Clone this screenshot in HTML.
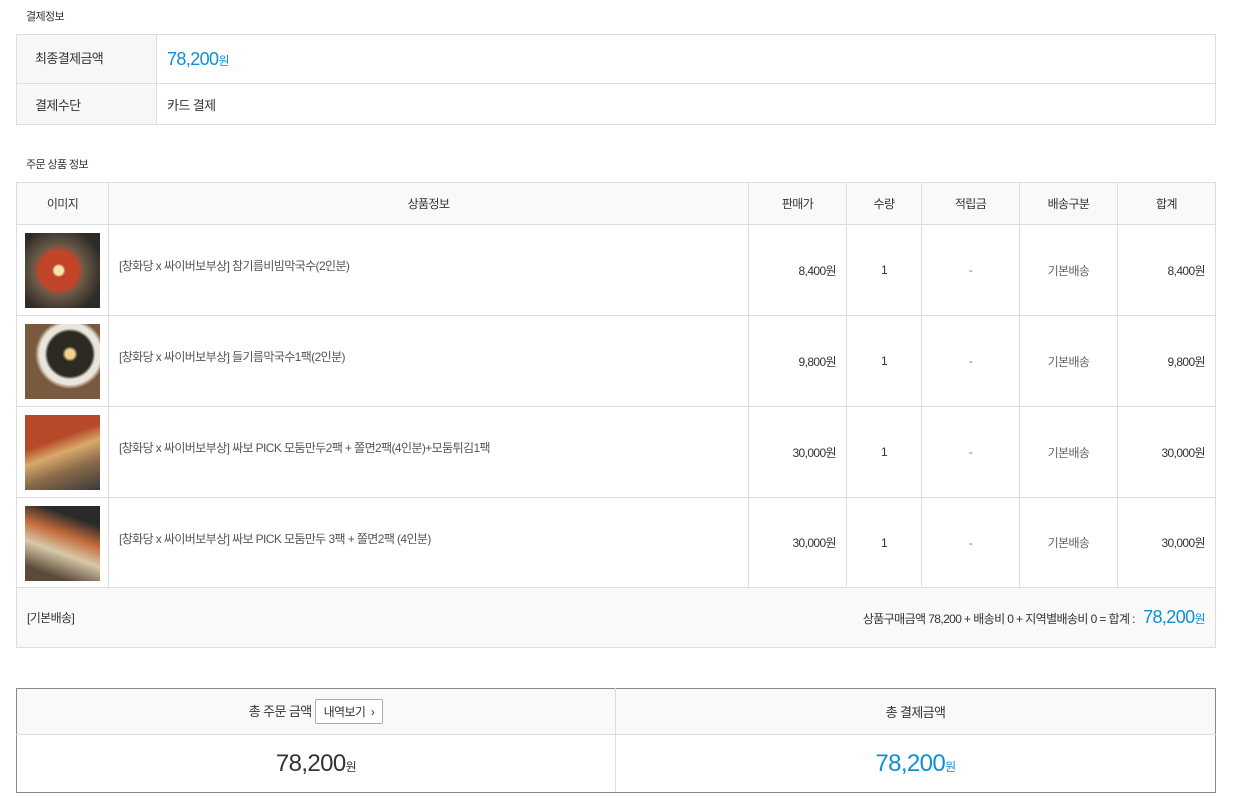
<!DOCTYPE html>
<html><head><meta charset="utf-8"><style>
*{margin:0;padding:0;box-sizing:border-box}
body{width:1233px;height:809px;background:#fff;font-family:"Liberation Sans","Noto Sans CJK KR",sans-serif;color:#333;font-size:12px;position:relative;overflow:hidden;letter-spacing:-0.6px}
.a{position:absolute}
.t{color:#333;font-size:11px}
table{border-collapse:collapse;position:absolute;table-layout:fixed}
td,th{border:1px solid #ddd;font-weight:normal}
.blue{color:#0e8fd5}
.img{width:75px;height:75px;position:absolute;left:8px;top:8px}
</style></head><body>
<div class="a t" style="left:26px;top:8px">결제정보</div>
<table style="left:16px;top:34px;width:1200px">
<tr style="height:49px"><td style="width:140px;background:#f7f7f7;padding-left:18px;font-size:13px;padding-bottom:4px">최종결제금액</td><td style="padding-left:10px"><span class="blue" style="font-size:18px">78,200</span><span class="blue" style="font-size:12px">원</span></td></tr>
<tr style="height:41px"><td style="background:#f7f7f7;padding-left:18px;font-size:13px">결제수단</td><td style="padding-left:10px;font-size:13px">카드 결제</td></tr>
</table>
<div class="a t" style="left:26px;top:156px">주문 상품 정보</div>
<table style="left:16px;top:182px;width:1199px;font-size:12px">
<tr style="height:42px;background:#f9f9f9;text-align:center"><td style="width:92px">이미지</td><td style="width:640px">상품정보</td><td style="width:98px">판매가</td><td style="width:75px">수량</td><td style="width:98px">적립금</td><td style="width:98px">배송구분</td><td style="width:98px">합계</td></tr>
<tr style="height:91px"><td style="position:relative"><div class="img" style="background:radial-gradient(circle at 45% 50%,#f5e6b0 0 8%,#c2452a 12% 35%,#6b5a48 45%,#2e2a26 80%)"></div></td><td style="padding-left:10px;color:#555;vertical-align:top;padding-top:32px">[창화당 x 싸이버보부상] 참기름비빔막국수(2인분)</td><td style="text-align:right;padding-right:10px">8,400원</td><td style="text-align:center">1</td><td style="text-align:center;color:#777">-</td><td style="text-align:center;color:#666">기본배송</td><td style="text-align:right;padding-right:10px">8,400원</td></tr>
<tr style="height:91px"><td style="position:relative"><div class="img" style="background:radial-gradient(circle at 60% 40%,#f3d58a 0 7%,#2b2b22 12% 35%,#e9e4dc 40% 48%,#7a5a3e 55%)"></div></td><td style="padding-left:10px;color:#555;vertical-align:top;padding-top:32px">[창화당 x 싸이버보부상] 들기름막국수1팩(2인분)</td><td style="text-align:right;padding-right:10px">9,800원</td><td style="text-align:center">1</td><td style="text-align:center;color:#777">-</td><td style="text-align:center;color:#666">기본배송</td><td style="text-align:right;padding-right:10px">9,800원</td></tr>
<tr style="height:91px"><td style="position:relative"><div class="img" style="background:linear-gradient(160deg,#b84a2a 0 35%,#d9a96a 50%,#8a6a4a 70%,#3a3a3a)"></div></td><td style="padding-left:10px;color:#555;vertical-align:top;padding-top:32px">[창화당 x 싸이버보부상] 싸보 PICK 모둠만두2팩 + 쫄면2팩(4인분)+모둠튀김1팩</td><td style="text-align:right;padding-right:10px">30,000원</td><td style="text-align:center">1</td><td style="text-align:center;color:#777">-</td><td style="text-align:center;color:#666">기본배송</td><td style="text-align:right;padding-right:10px">30,000원</td></tr>
<tr style="height:90px"><td style="position:relative"><div class="img" style="background:linear-gradient(200deg,#2a2a2a 0 20%,#c26a3a 40%,#d8c8a8 60%,#5a4a3a 85%)"></div></td><td style="padding-left:10px;color:#555;vertical-align:top;padding-top:32px">[창화당 x 싸이버보부상] 싸보 PICK 모둠만두 3팩 + 쫄면2팩 (4인분)</td><td style="text-align:right;padding-right:10px">30,000원</td><td style="text-align:center">1</td><td style="text-align:center;color:#777">-</td><td style="text-align:center;color:#666">기본배송</td><td style="text-align:right;padding-right:10px">30,000원</td></tr>
<tr style="height:60px;background:#f9f9f9"><td colspan="2" style="border-right:none;padding-left:10px">[기본배송]</td><td colspan="5" style="border-left:none;text-align:right;padding-right:10px">상품구매금액 78,200 + 배송비 0 + 지역별배송비 0 = 합계 : &nbsp; <span class="blue" style="font-size:18px">78,200</span><span class="blue">원</span></td></tr>
</table>
<table style="left:16px;top:688px;width:1200px;border:1px solid #888">
<tr style="height:46px;background:#f9f9f9;text-align:center;font-size:13px"><td style="width:599px;border-color:#ddd;border-top:1px solid #888;border-left:1px solid #888">총 주문 금액 <span style="display:inline-block;border:1px solid #aaa;background:#fff;padding:3px 8px;font-size:12px;border-radius:2px">내역보기 &nbsp;›</span></td><td style="border-top:1px solid #888;border-right:1px solid #888">총 결제금액</td></tr>
<tr style="height:58px;text-align:center"><td style="border-bottom:1px solid #888;border-left:1px solid #888"><span style="font-size:24px;color:#333">78,200</span><span style="font-size:12px">원</span></td><td style="border-bottom:1px solid #888;border-right:1px solid #888"><span class="blue" style="font-size:24px">78,200</span><span class="blue" style="font-size:12px">원</span></td></tr>
</table>
</body></html>
